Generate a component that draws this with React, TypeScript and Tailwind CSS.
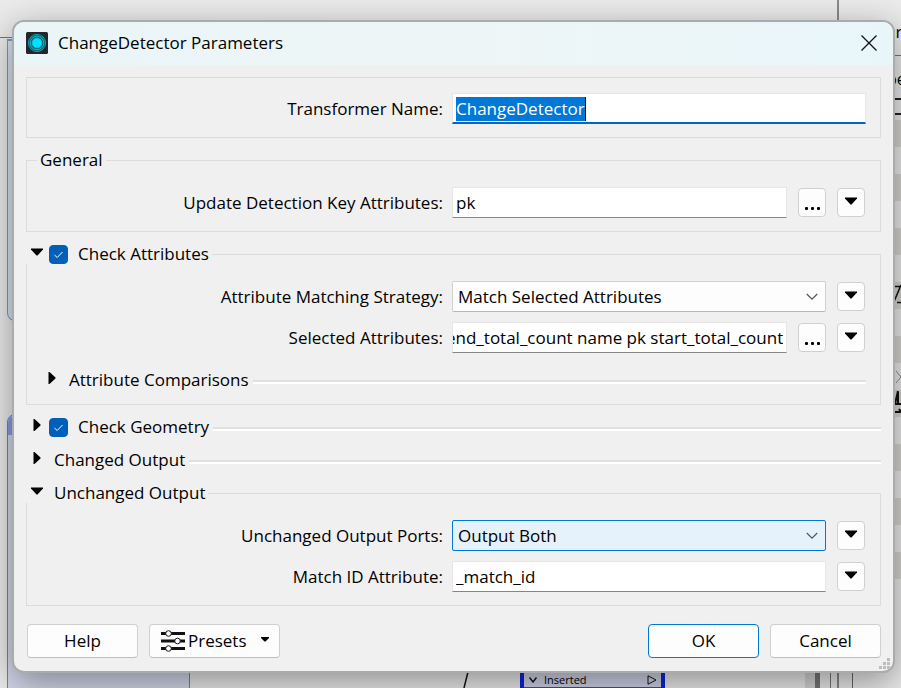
import { useEffect, useRef, type ReactNode } from "react";

const fieldClass =
  "h-[31px] w-full min-w-0 border border-[#e6e6e6] border-b-[#868686] bg-white text-[17px] text-black outline-none";

function Down({ className = "" }: { className?: string }) {
  return (
    <svg className={className} width="12" height="8" viewBox="0 0 12 8" aria-hidden="true">
      <path d="M0 0.5H12V1.5L6.5 7.5H5.5L0 1.5Z" fill="#000" />
    </svg>
  );
}

function Right() {
  return (
    <svg width="8" height="12" viewBox="0 0 8 12" aria-hidden="true">
      <path d="M0.5 0H1.5L7.5 5.5V6.5L1.5 12H0.5Z" fill="#000" />
    </svg>
  );
}

function MenuButton({ label }: { label: string }) {
  return (
    <button
      aria-label={label}
      className="mr-px flex h-[29px] w-7 shrink-0 items-center justify-center rounded border border-[#d0d0d0] bg-[#fdfdfd] pb-1"
    >
      <Down />
    </button>
  );
}

function MoreButton({ label }: { label: string }) {
  return (
    <button
      aria-label={label}
      className="flex h-[29px] w-7 shrink-0 items-end justify-center gap-[3px] rounded border border-[#d0d0d0] bg-[#fdfdfd] pb-[6px]"
    >
      <span className="size-[3px] rounded-[1px] bg-black" />
      <span className="size-[3px] rounded-[1px] bg-black" />
      <span className="size-[3px] rounded-[1px] bg-black" />
    </button>
  );
}

function Row({ id, label, children }: { id: string; label: string; children: ReactNode }) {
  return (
    <div className="grid grid-cols-2 items-center gap-[9px] pr-[14px] pl-[2px]">
      <label htmlFor={id} className="text-right whitespace-nowrap">
        {label}
      </label>
      <div className="flex h-[31px] min-w-0 items-center gap-[11px]">{children}</div>
    </div>
  );
}

function Select({ id, value, active = false }: { id: string; value: string; active?: boolean }) {
  return (
    <div className="relative min-w-0 flex-1">
      <select
        id={id}
        defaultValue={value}
        className={
          "block h-[31px] w-full appearance-none rounded-xs border pr-8 pl-[5px] text-[17px] text-black outline-none " +
          (active ? "border-[#0078d4] bg-[#e5f1fb]" : "border-[#d0d0d0] border-b-[#b8b8b8] bg-[#fdfdfd]")
        }
      >
        <option>{value}</option>
      </select>
      <svg
        className="pointer-events-none absolute top-3 right-2"
        width="12"
        height="8"
        viewBox="0 0 12 8"
        fill="none"
        stroke="#555"
        strokeWidth="1.2"
        aria-hidden="true"
      >
        <path d="M0.8 1L6 6.2L11.2 1" />
      </svg>
    </div>
  );
}

function Check({ id }: { id: string }) {
  return (
    <span className="relative mr-[10px] ml-[6px] block size-[19px] shrink-0">
      <input
        id={id}
        type="checkbox"
        defaultChecked
        className="peer block size-[19px] appearance-none rounded border border-[#005fb8] checked:bg-[#005fb8]"
      />
      <svg
        className="pointer-events-none absolute inset-0 hidden peer-checked:block"
        width="19"
        height="19"
        viewBox="0 0 19 19"
        fill="none"
        stroke="#fff"
        aria-hidden="true"
      >
        <path d="M5.5 10L8.2 12.5L13.5 7" />
      </svg>
    </span>
  );
}

function Collapsed({ title, check }: { title: string; check?: string }) {
  return (
    <div className="flex h-[21px] items-center pb-px">
      <button aria-label={"Expand " + title} className="flex w-[17px] shrink-0 justify-end pr-[2px] pb-1">
        <Right />
      </button>
      {check ? (
        <>
          <Check id={check} />
          <label htmlFor={check}>{title}</label>
        </>
      ) : (
        <span className="ml-[11px]">{title}</span>
      )}
      <div className="mt-[3px] ml-1 h-1 flex-1 border-t-2 border-[#e0e0e0] bg-white" />
    </div>
  );
}

function Backdrop() {
  return (
    <div aria-hidden="true" className="absolute inset-0 overflow-hidden bg-[#ebebeb] text-black">
      <div className="absolute top-0 left-[837px] h-full w-[80px] border-l-2 border-[#8a8a8a] bg-[#ebebeb]" />
      <div className="absolute top-[37px] left-0 h-px w-4 bg-[#777]" />
      <div className="absolute top-[39px] left-[7px] h-[282px] w-10 rounded-b-lg border border-t-2 border-[#6f9bd1] bg-[#d9e4f0]" />
      <div className="absolute top-[414px] left-[7px] h-[300px] w-[183px] rounded-t-lg border border-[#6a7cdc] bg-[#d4d8ea]">
        <div className="h-5 rounded-t-lg bg-[#8c9ae6]" />
      </div>
      <div className="absolute top-[22px] left-[885px] text-[17px]">ur</div>
      <div className="absolute top-[55px] left-[890px] h-px w-4 bg-[#777]" />
      <div className="absolute top-[67px] left-[887px] text-base">pe</div>
      <div className="absolute top-[98px] left-[885px] h-[17px] w-8 border-y-2 border-[#222]" />
      {[120, 174, 228, 282, 336, 390, 444, 498, 552].map((top) => (
        <div key={top} className="absolute left-[885px] h-[27px] w-8 bg-[#d6d5d1]" style={{ top }} />
      ))}
      <svg className="absolute top-[280px] left-[889px]" width="12" height="140" viewBox="0 0 12 140" fill="none">
        <path d="M2 6.5H12M4 24L12 5M8 22.5H12" stroke="#111" strokeWidth="1.5" />
        <path d="M7 91L12 97L7 103" stroke="#888" />
        <path d="M9 111L6 124H12M9 112V124M4 132H12L10 129" stroke="#111" strokeWidth="2" />
      </svg>
      <svg className="absolute top-[668px] left-[462px]" width="10" height="20" viewBox="0 0 10 20" fill="none">
        <path d="M7 0L2 20" stroke="#111" strokeWidth="1.5" />
      </svg>
      <div className="absolute top-[660px] left-[520px] flex h-8 w-[145px] items-center border-x-4 border-[#0a26d8] bg-[#cfd2e6] pt-2 pl-[5px] text-[11px]">
        <svg width="8" height="6" viewBox="0 0 8 6" fill="none" stroke="#111" strokeWidth="1.4">
          <path d="M0.5 0.5L4 5L7.5 0.5" />
        </svg>
        <span className="ml-[7px] flex-1">Inserted</span>
        <svg className="mr-1" width="10" height="10" viewBox="0 0 10 10" fill="none" stroke="#111">
          <path d="M1 0.8V9.2L9 5Z" />
        </svg>
      </div>
      <div className="absolute top-[687px] left-[524px] h-px w-[137px] bg-[#3a4cc0]" />
      <div className="absolute top-[640px] left-[805px] h-12 w-[10px] bg-[#d4d4d4]" />
      <div className="absolute top-[640px] left-[815px] h-12 w-[5px] bg-[#777]" />
      <div className="absolute top-[640px] left-[830px] h-12 w-px bg-[#777]" />
      <div className="absolute top-[640px] left-[852px] h-12 w-px bg-[#666]" />
    </div>
  );
}

export default function App() {
  const selectedRef = useRef<HTMLInputElement>(null);

  useEffect(() => {
    const field = selectedRef.current;
    if (field) field.scrollLeft = field.scrollWidth;
  }, []);

  return (
    <div className="relative min-h-screen overflow-hidden pt-5 pr-[6px] pb-[15px] pl-3 font-['Open_Sans','Noto_Sans',sans-serif] text-[17px] leading-5 text-black">
      <Backdrop />
      <div
        role="dialog"
        aria-label="ChangeDetector Parameters"
        className="relative overflow-hidden rounded-xl border-2 border-[#a9abac] bg-[#f0f0f0] shadow-[0_10px_36px_rgba(0,0,0,0.4)]"
      >
        <header className="flex h-[43px] items-center bg-linear-to-r from-[#eaf5f8] via-[#eef5f6] to-[#e8f6fa] pr-4 pb-[2px] pl-3">
          <svg width="22" height="22" viewBox="0 0 22 22" fill="none" aria-hidden="true">
            <rect width="22" height="22" rx="1.5" fill="#23272b" />
            <circle cx="11" cy="11" r="8.6" fill="#0b6470" stroke="#0e9db0" />
            <circle cx="11" cy="11" r="6.8" stroke="#0cb4ca" />
            <circle cx="11" cy="11" r="4.8" fill="#00e0ff" stroke="#08c4dc" />
          </svg>
          <h1 className="ml-[10px] flex-1">ChangeDetector Parameters</h1>
          <button aria-label="Close">
            <svg width="16" height="16" viewBox="0 0 16 16" fill="none" stroke="#111" strokeWidth="1.3">
              <path d="M0.5 0.5L15.5 15.5M15.5 0.5L0.5 15.5" />
            </svg>
          </button>
        </header>

        <main className="flex flex-col gap-3 px-3 pt-3">
          <section className="border border-[#dcdcdc] pt-[15px] pb-[13px]">
            <Row id="name" label="Transformer Name:">
              <div className="flex h-[31px] flex-1 items-center border border-b-2 border-[#e6e6e6] border-b-[#0067c0] bg-white pt-px pl-[3px]">
                <input
                  id="name"
                  defaultValue="ChangeDetector"
                  className="field-sizing-content h-6 border-r border-black bg-[#0078d7] text-white outline-none"
                />
              </div>
            </Row>
          </section>

          <fieldset className="border border-[#dcdcdc] pb-[13px]">
            <legend className="ml-[10px] px-[3px]">General</legend>
            <div className="pt-[17px]">
              <Row id="key" label="Update Detection Key Attributes:">
                <input id="key" defaultValue="pk" className={fieldClass + " px-[3px]"} />
                <MoreButton label="Choose key attributes" />
                <MenuButton label="Key attributes options" />
              </Row>
            </div>
          </fieldset>

          <fieldset className="border border-[#dcdcdc] pb-[13px]">
            <legend className="-ml-px flex items-center bg-[#f0f0f0] pr-[3px]">
              <button aria-label="Collapse Check Attributes" className="w-[17px] pb-1 pl-[5px]">
                <Down />
              </button>
              <Check id="attributes" />
              <label htmlFor="attributes">Check Attributes</label>
            </legend>
            <div className="flex flex-col gap-[10px] pt-[17px]">
              <Row id="strategy" label="Attribute Matching Strategy:">
                <Select id="strategy" value="Match Selected Attributes" />
                <MenuButton label="Strategy options" />
              </Row>
              <Row id="selected" label="Selected Attributes:">
                <input
                  id="selected"
                  ref={selectedRef}
                  defaultValue="end_total_count name pk start_total_count"
                  className={fieldClass + " pr-[3px]"}
                />
                <MoreButton label="Choose attributes" />
                <MenuButton label="Selected attributes options" />
              </Row>
            </div>
            <div className="px-[14px] pt-[17px]">
              <Collapsed title="Attribute Comparisons" />
            </div>
          </fieldset>

          <Collapsed title="Check Geometry" check="geometry" />
          <Collapsed title="Changed Output" />

          <fieldset className="border border-[#dcdcdc] pb-[13px]">
            <legend className="-ml-px flex items-center bg-[#f0f0f0] pr-[3px]">
              <button aria-label="Collapse Unchanged Output" className="mr-[11px] w-[17px] pb-1 pl-[5px]">
                <Down />
              </button>
              Unchanged Output
            </legend>
            <div className="flex flex-col gap-[10px] pt-[17px]">
              <Row id="ports" label="Unchanged Output Ports:">
                <Select id="ports" value="Output Both" active />
                <MenuButton label="Ports options" />
              </Row>
              <Row id="match" label="Match ID Attribute:">
                <input id="match" defaultValue="_match_id" className={fieldClass + " px-[3px]"} />
                <MenuButton label="Match ID options" />
              </Row>
            </div>
          </fieldset>
        </main>

        <footer className="flex gap-[11px] pt-[18px] pr-3 pb-[13px] pl-[13px]">
          <button className="h-[34px] w-[111px] rounded border border-[#d0d0d0] border-b-[#bdbdbd] bg-[#fdfdfd]">
            Help
          </button>
          <button className="flex h-[34px] w-[131px] items-center rounded border border-[#d0d0d0] border-b-[#bdbdbd] bg-[#fdfdfd] pl-[11px]">
            <svg width="24" height="22" viewBox="0 0 24 22" fill="#fff" stroke="#111" aria-hidden="true">
              <path d="M0 3.5H24M0 11H24M0 18.5H24" strokeWidth="3" />
              <circle cx="7.5" cy="3.5" r="2.8" />
              <circle cx="16.5" cy="11" r="2.8" />
              <circle cx="7.5" cy="18.5" r="2.8" />
            </svg>
            <span className="ml-[3px]">Presets</span>
            <svg className="mr-[10px] mb-1 ml-auto" width="8" height="5" viewBox="0 0 8 5" aria-hidden="true">
              <path d="M0 0H8V1L4.5 4.5H3.5L0 1Z" fill="#000" />
            </svg>
          </button>
          <button className="ml-auto h-[34px] w-[111px] rounded border border-[#0078d4] bg-[#fdfdfd]">OK</button>
          <button className="h-[34px] w-[111px] rounded border border-[#d0d0d0] border-b-[#bdbdbd] bg-[#fdfdfd]">
            Cancel
          </button>
        </footer>
        <svg className="absolute right-[3px] bottom-[2px]" width="11" height="11" viewBox="0 0 11 11" fill="#bdbdbd">
          <path d="M8 0h3v3h-3zM4 4h3v3h-3zM8 4h3v3h-3zM0 8h3v3h-3zM4 8h3v3h-3zM8 8h3v3h-3z" />
        </svg>
      </div>
    </div>
  );
}
